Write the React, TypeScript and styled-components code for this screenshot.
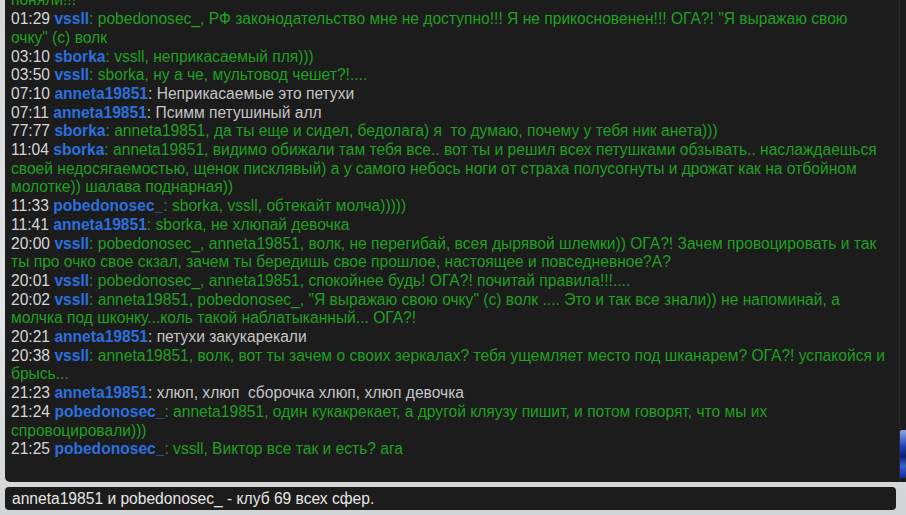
import React from 'react';
import styled, { createGlobalStyle } from 'styled-components';

type Msg = {
    time: string,
    nick: string,
    text: string,
    tone?: 'green' | 'gray'
};

const messages: Msg[] = [
    { time: '', nick: '', text: 'поняли!!!' },
    { time: '01:29', nick: 'vssll', text: 'pobedonosec_, РФ законодательство мне не доступно!!! Я не прикосновенен!!! ОГА?! "Я выражаю свою очку" (с) волк' },
    { time: '03:10', nick: 'sborka', text: 'vssll, неприкасаемый пля)))' },
    { time: '03:50', nick: 'vssll', text: 'sborka, ну а че, мультовод чешет?!....' },
    { time: '07:10', nick: 'anneta19851', text: 'Неприкасаемые это петухи', tone: 'gray' },
    { time: '07:11', nick: 'anneta19851', text: 'Псимм петушиный алл', tone: 'gray' },
    { time: '77:77', nick: 'sborka', text: 'anneta19851, да ты еще и сидел, бедолага) я\u00a0 то думаю, почему у тебя ник анета)))' },
    { time: '11:04', nick: 'sborka', text: 'anneta19851, видимо обижали там тебя все.. вот ты и решил всех петушками обзывать.. наслаждаешься своей недосягаемостью, щенок писклявый) а у самого небось ноги от страха полусогнуты и дрожат как на отбойном молотке)) шалава поднарная))' },
    { time: '11:33', nick: 'pobedonosec_', text: 'sborka, vssll, обтекайт молча)))))' },
    { time: '11:41', nick: 'anneta19851', text: 'sborka, не хлюпай девочка' },
    { time: '20:00', nick: 'vssll', text: 'pobedonosec_, anneta19851, волк, не перегибай, всея дырявой шлемки)) ОГА?! Зачем провоцировать и так ты про очко свое скзал, зачем ты бередишь свое прошлое, настоящее и повседневное?А?' },
    { time: '20:01', nick: 'vssll', text: 'pobedonosec_, anneta19851, спокойнее будь! ОГА?! почитай правила!!!....' },
    { time: '20:02', nick: 'vssll', text: 'anneta19851, pobedonosec_, "Я выражаю свою очку" (с) волк .... Это и так все знали)) не напоминай, а молчка под шконку...коль такой наблатыканный... ОГА?!' },
    { time: '20:21', nick: 'anneta19851', text: 'петухи закукарекали', tone: 'gray' },
    { time: '20:38', nick: 'vssll', text: 'anneta19851, волк, вот ты зачем о своих зеркалах? тебя ущемляет место под шканарем? ОГА?! успакойся и брысь...' },
    { time: '21:23', nick: 'anneta19851', text: 'хлюп, хлюп\u00a0 сборочка хлюп, хлюп девочка', tone: 'gray' },
    { time: '21:24', nick: 'pobedonosec_', text: 'anneta19851, один кукакрекает, а другой кляузу пишит, и потом говорят, что мы их спровоцировали)))' },
    { time: '21:25', nick: 'pobedonosec_', text: 'vssll, Виктор все так и есть? ага' },
];

export default function App() {
    return (
        <>
            <Global />
            <Page>
                <ChatPanel>
                    <Feed>
                        {messages.map((m, i) => (
                            <Line key={i}>
                                {m.time && <Time>{m.time} </Time>}
                                {m.nick && <Nick>{m.nick}</Nick>}
                                <Text $tone={m.tone ?? 'green'}>
                                    {m.nick ? ': ' : ''}{m.text}
                                </Text>
                            </Line>
                        ))}
                    </Feed>
                    <ScrollTrack>
                        <ScrollThumb />
                    </ScrollTrack>
                </ChatPanel>
                <StatusBar>anneta19851 и pobedonosec_ - клуб 69 всех сфер.</StatusBar>
            </Page>
        </>
    );
}

const Global = createGlobalStyle`
    html, body {
        margin: 0;
        padding: 0;
        background: #dcdcdc;
        overflow: hidden;
    }
`;

const Page = styled.div`
    width: 906px;
    height: 515px;
    display: flex;
    flex-direction: column;
    gap: 5px;
    padding-left: 5px;
    box-sizing: border-box;
    background: linear-gradient(180deg, #d4d6d8 0%, #e4e5e6 60%, #d2d4d6 100%);
    font-family: "Liberation Sans", Arial, sans-serif;
    font-size: 15.6px;
    line-height: 18.7px;
`;

const ChatPanel = styled.div`
    height: 482px;
    display: flex;
    background: #1c1c1c;
    border-bottom-left-radius: 5px;
    overflow: hidden;
`;

const Feed = styled.div`
    flex: 1;
    display: flex;
    flex-direction: column;
    justify-content: flex-end;
    padding: 0 13px 23px 6px;
    overflow: hidden;
`;

const Line = styled.div`
    white-space: normal;
`;

const Time = styled.span`
    color: #d6d6d6;
`;

const Nick = styled.span`
    color: #2b70de;
    font-weight: bold;
`;

const Text = styled.span<{ $tone: 'green' | 'gray' }>`
    color: ${p => p.$tone === 'gray' ? '#c6c6c6' : '#20a020'};
`;

const ScrollTrack = styled.div`
    width: 6px;
    display: flex;
    flex-direction: column;
    justify-content: flex-end;
    padding-bottom: 4px;
    border-left: 1px solid #2a2a2a;
`;

const ScrollThumb = styled.div`
    height: 48px;
    border-radius: 2px 0 0 2px;
    background: linear-gradient(180deg, #8fa6e6 0%, #1d3fb8 35%, #0c1f7a 55%, #3a5fd8 75%, #0f2a9c 100%);
`;

const StatusBar = styled.div`
    width: 891px;
    height: 23px;
    box-sizing: border-box;
    padding: 3px 0 0 7px;
    background: #1c1c1c;
    border-radius: 4px;
    color: #e6e6e6;
    white-space: nowrap;
`;
